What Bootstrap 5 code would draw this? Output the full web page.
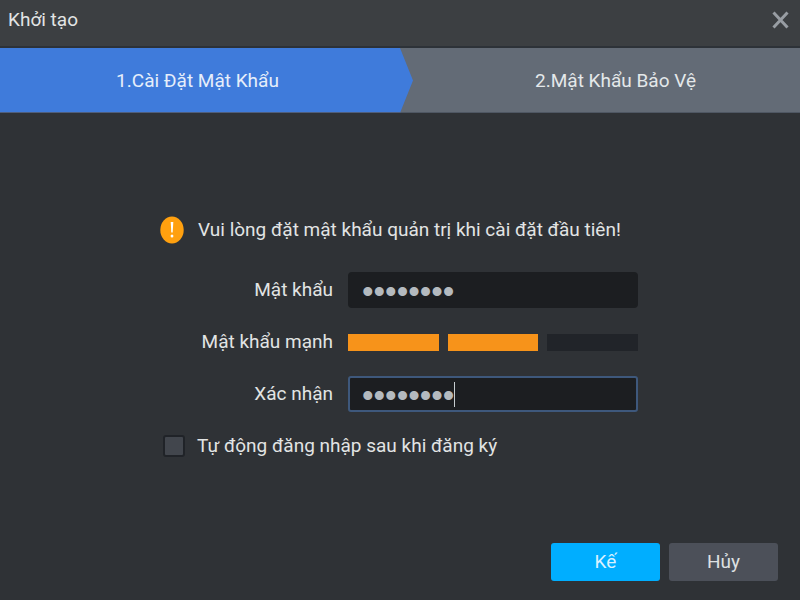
<!DOCTYPE html>
<html lang="vi">
<head>
<meta charset="utf-8">
<meta name="viewport" content="width=device-width, initial-scale=1">
<title>Khởi tạo</title>
<link href="https://cdn.jsdelivr.net/npm/bootstrap@5.3.0/dist/css/bootstrap.min.css" rel="stylesheet">
<style>
body { background: #2f3236; color: #e2e4e4; font-family: Roboto, "Liberation Sans", sans-serif; font-size: 19px; line-height: 28px; }
.title-bar { background: #3c3f42; height: 48px; padding: 0 11px 6px 8px; border-bottom: 2px solid #2d3238; }
.title-text { font-size: 19px; line-height: 28px; }
.close-btn { width: 17px; height: 18px; color: #989da3; }
.steps { background: #636b76; height: 65px; color: #e4e8ea; }
.step-current { background: #3f7bdb; clip-path: polygon(0 0, calc(100% - 13px) 0, 100% 50%, calc(100% - 13px) 100%, 0 100%); margin-right: -13px; padding-right: 18px; color: #e6eefa; }
.step-current, .step-next { padding-top: 2px; border-bottom: 1px solid #4f5e7c; }
.step-next { padding-left: 31px; border-color: #4f5763; }
.setup-form { width: 480px; padding-top: 99px; padding-right: 2px; }
.notice { height: 36px; margin-bottom: 24px; gap: 14px; }
.setup-row { height: 36px; margin-bottom: 16px; gap: 15px; }
.field-box { width: 290px; }
.pw-input, .pw-input:focus { height: 36px; background: #1c1e21; border: 2px solid #1c1e21; border-radius: 4px; color: #b4babf; font-family: "Liberation Sans", sans-serif; font-size: 33px; padding: 4px 12px 0; box-shadow: none; }
.pw-input.is-active { border-color: #3e587c; border-radius: 3px; }
.text-caret { left: 106px; top: 6px; width: 1px; height: 25px; background: #c6cdd0; }
.strength { gap: 9px; height: 17px; }
.strength-part { background: #212429; }
.strength-part.is-on { background: #f7931a; }
.tick-box.form-check-input { width: 22px; height: 22px; background-color: #42464d; border: 2px solid #202328; border-radius: 3px; }
.tick-row { gap: 12px; padding-left: 3px; }
.actions { padding: 0 22px 19px; gap: 9px; }
.action-btn { width: 109px; height: 38px; font-size: 19px; line-height: 28px; padding: 0; border: 0; border-radius: 3px; }
.btn-go, .btn-go:hover { background: #00aeff; color: #d8f1ff; }
.btn-stop, .btn-stop:hover { background: #4c5059; color: #dee0e2; }
</style>
</head>
<body class="min-vh-100 d-flex flex-column">
<header class="title-bar d-flex align-items-center justify-content-between">
  <h1 class="title-text m-0 fw-normal">Khởi tạo</h1>
  <button type="button" class="close-btn btn p-0 border-0 d-flex" aria-label="Đóng">
    <svg width="17" height="18" viewBox="0 0 17 18" fill="none" stroke="currentColor" stroke-width="3"><path d="M1.5 1.5 15.5 16.5M15.5 1.5 1.5 16.5"/></svg>
  </button>
</header>
<nav class="steps d-flex text-center" aria-label="Các bước">
  <div class="step-current w-50 flex-grow-1 d-flex align-items-center justify-content-center" aria-current="step">1.Cài Đặt Mật Khẩu</div>
  <div class="step-next w-50 d-flex align-items-center justify-content-center">2.Mật Khẩu Bảo Vệ</div>
</nav>
<form class="flex-grow-1 d-flex flex-column">
  <div class="setup-form mw-100 mx-auto">
    <div class="notice d-flex align-items-center">
      <svg class="flex-shrink-0" width="24" height="28" viewBox="0 0 24 28" aria-hidden="true"><ellipse cx="12" cy="14" rx="11.7" ry="13.5" fill="#ffa00f"/><path d="M10.7 6h2.6l-.6 10.5h-1.4z" fill="#fff"/><ellipse cx="12" cy="20" rx="1.4" ry="1.5" fill="#fff"/></svg>
      <span>Vui lòng đặt mật khẩu quản trị khi cài đặt đầu tiên!</span>
    </div>
    <div class="setup-row d-flex align-items-center">
      <label for="pw" class="flex-grow-1 text-end">Mật khẩu</label>
      <div class="field-box"><input type="password" id="pw" class="form-control pw-input" value="12345678"></div>
    </div>
    <div class="setup-row d-flex align-items-center">
      <span class="flex-grow-1 text-end">Mật khẩu mạnh</span>
      <div class="field-box strength d-flex" role="img" aria-label="Độ mạnh 2 trên 3">
        <div class="strength-part is-on flex-fill"></div><div class="strength-part is-on flex-fill"></div><div class="strength-part flex-fill"></div>
      </div>
    </div>
    <div class="setup-row d-flex align-items-center">
      <label for="pw2" class="flex-grow-1 text-end">Xác nhận</label>
      <div class="field-box position-relative"><input type="password" id="pw2" class="form-control pw-input is-active" value="12345678"><span class="text-caret position-absolute"></span></div>
    </div>
    <div class="setup-row tick-row d-flex align-items-center">
      <input type="checkbox" id="auto" class="form-check-input tick-box m-0"><label for="auto">Tự động đăng nhập sau khi đăng ký</label>
    </div>
  </div>
  <div class="actions d-flex justify-content-end mt-auto">
    <button type="submit" class="btn action-btn btn-go">Kế</button>
    <button type="button" class="btn action-btn btn-stop">Hủy</button>
  </div>
</form>
<script src="https://cdn.jsdelivr.net/npm/bootstrap@5.3.0/dist/js/bootstrap.bundle.min.js"></script>
</body>
</html>
